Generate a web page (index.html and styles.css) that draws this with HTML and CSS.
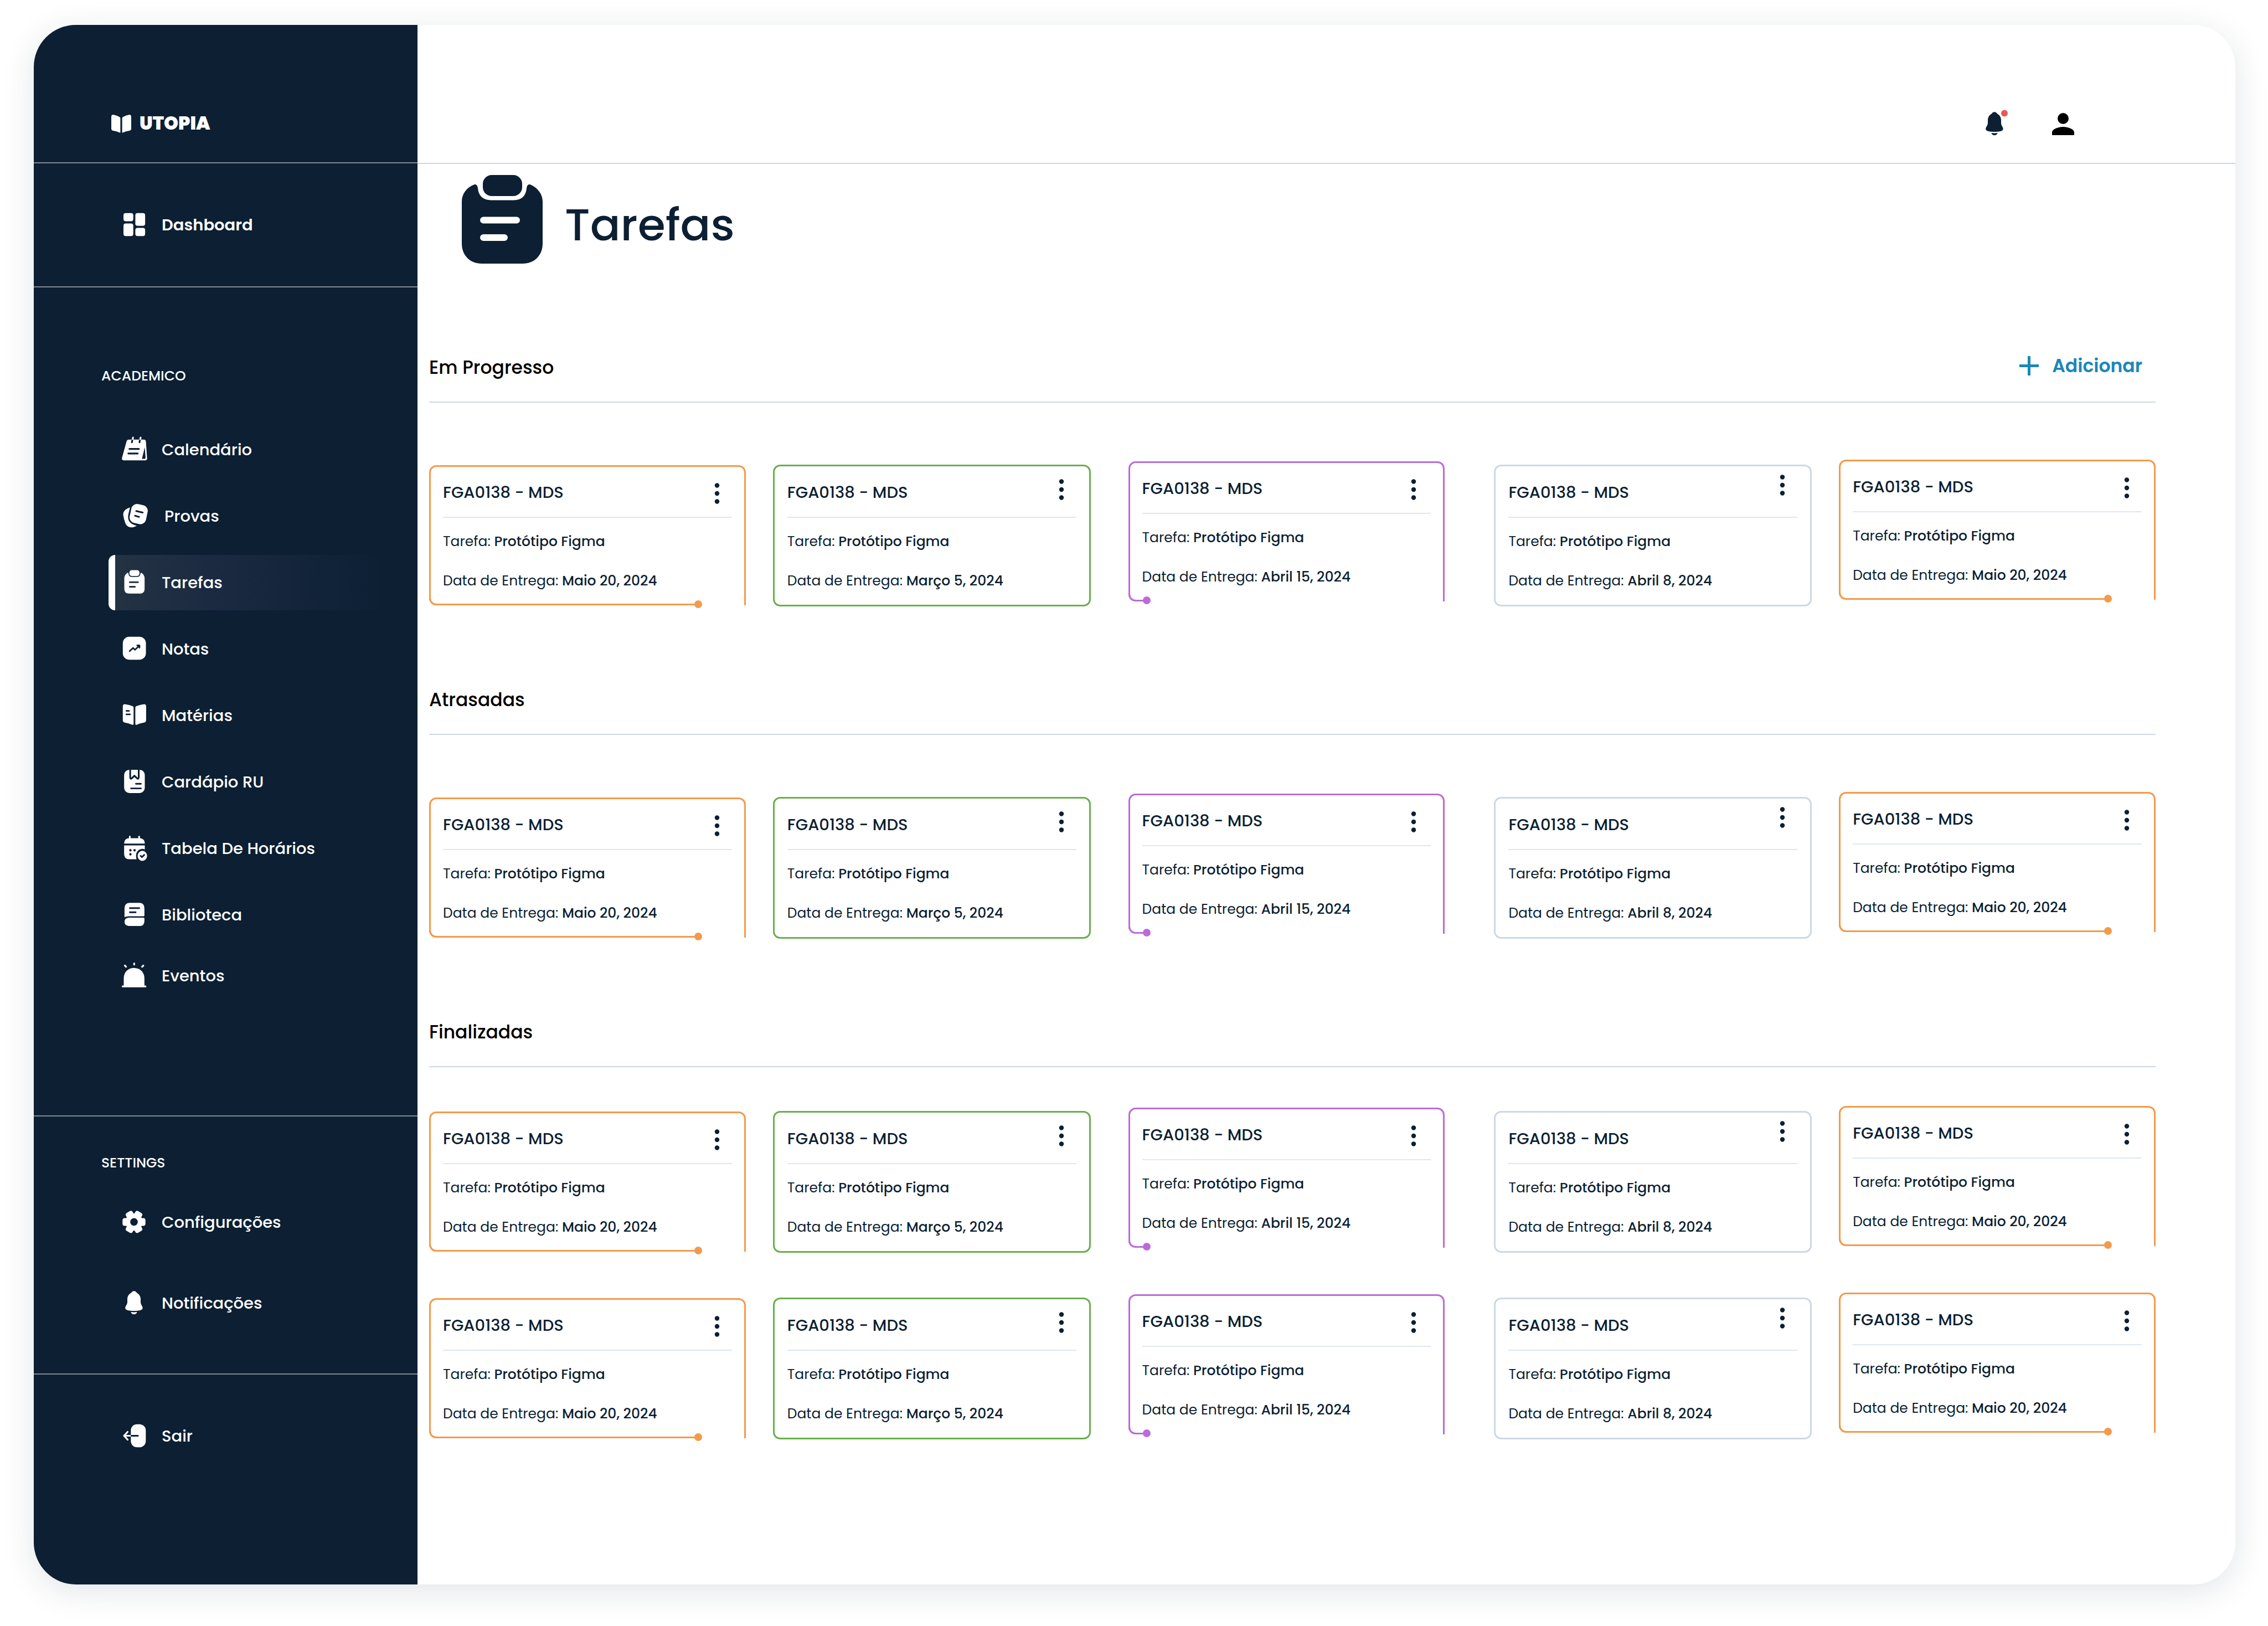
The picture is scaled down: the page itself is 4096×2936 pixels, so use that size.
FILE: index.html
```
<!DOCTYPE html>
<html lang="pt-BR">
<head>
<meta charset="utf-8">
<meta name="viewport" content="width=device-width, initial-scale=1">
<title>Utopia – Tarefas</title>
<link rel="stylesheet" href="styles.css">
</head>
<body>
<svg class="sprite" aria-hidden="true">
  <symbol id="i-more" viewBox="0 0 10 38"><circle cx="5" cy="4.5" r="4.2"/><circle cx="5" cy="19" r="4.2"/><circle cx="5" cy="33.5" r="4.2"/></symbol>
  <symbol id="i-bell" viewBox="0 0 50 50"><path d="M24 3.3C27 3.3 28.4 5.4 28.8 6.2C33.5 8.8 36 13 36 18V23C36 28 39.6 30 39.6 34C39.6 38 32 39 24 39S8.2 38 8.2 34C8.2 30 12 28 12 23V18C12 13 14.4 8.8 19.2 6.2C19.6 5.4 21 3.3 24 3.3Z"/><path d="M18.3 41Q24 41.8 29.7 41Q28 45.3 24 45.3Q20 45.3 18.3 41Z"/></symbol>
</svg>
<div class="shell">
  <aside class="sidebar">
    <a class="brand" href="#">
      <svg class="brand__icon" viewBox="11 12 123 104" preserveAspectRatio="none" aria-hidden="true"><path d="M11 26Q11 10 25 13Q45 17 62 25Q67 28 67 33V111Q67 117 61 114Q45 106 22 103Q11 102 11 90ZM134 26Q134 10 120 13Q100 17 83 25Q78 28 78 33V111Q78 117 84 114Q100 106 123 103Q134 102 134 90Z"/></svg>
      <span class="brand__name">UTOPIA</span>
    </a>
    <nav class="group group--top" aria-label="Principal">
      <a class="item item--strong" href="#"><svg class="item__icon" viewBox="0 0 50 50" aria-hidden="true"><rect x="5" y="3.8" width="17.7" height="14.7" rx="4"/><rect x="5" y="22.5" width="17.7" height="22.8" rx="4"/><rect x="26.4" y="3.8" width="17.7" height="23" rx="4"/><rect x="26.4" y="30.6" width="17.7" height="14.7" rx="4"/></svg>Dashboard</a>
    </nav>
    <nav class="group group--academic" aria-labelledby="nav-academic">
      <h2 class="group__label" id="nav-academic">ACADEMICO</h2>
      <div class="group__list">
      <a class="item" href="#"><svg class="item__icon" viewBox="0 0 146 146" aria-hidden="true"><path d="M65 9L62 22M105 9L102 22" class="w" stroke-width="9"/><path d="M44 20H122Q132 20 133 31L139 118Q140 129 129 129H17Q4 129 7 115L30 32Q33 20 44 20Z"/><path class="cut" d="M127 60L131 115Q131 121 126 121H112Z"/><path class="k" stroke-width="9" d="M46 69H96M40 93H90"/><path class="k" stroke-width="9" d="M61 24L59 34M101 24L99 34"/></svg>Calendário</a>
      <a class="item" href="#"><svg class="item__icon item__icon--wide" viewBox="0 0 161 146" aria-hidden="true"><path d="M49 27Q13 37 13 65Q16 88 25 112Q34 132 55 132Q70 132 85 124Q32 112 40 66Z"/><rect x="51" y="11" width="88" height="102" rx="30" transform="rotate(12 95 62)"/><path class="k" stroke-width="9" d="M82 46L116 54M76 71L97 77"/></svg>Provas</a>
      <a class="item item--active" href="#" aria-current="page"><svg class="item__icon" viewBox="0 0 146 146" aria-hidden="true"><rect x="46" y="7" width="53" height="31" rx="13"/><path d="M36 21Q41 20 41 27Q43 43 58 43H87Q102 43 104 27Q104 20 109 21Q126 31 126 50V105Q126 131 100 131H45Q19 131 19 105V50Q19 31 36 21Z"/><path class="k" stroke-width="9" d="M48 71H91M48 95H75"/></svg>Tarefas</a>
      <a class="item" href="#"><svg class="item__icon" viewBox="0 0 146 146" aria-hidden="true"><rect x="11" y="8" width="122" height="121" rx="34"/><path class="k" stroke-width="8" d="M47 84L65 67L75 77L97 56M87 54H99V66"/></svg>Notas</a>
      <a class="item" href="#"><svg class="item__icon" viewBox="0 0 146 138" preserveAspectRatio="none" aria-hidden="true"><path d="M11 24Q11 11 25 13Q45 16 62 22Q68 24 68 29V111Q68 117 61 115Q45 108 22 104Q11 103 11 92ZM134 24Q134 11 120 13Q100 16 83 22Q77 24 77 29V111Q77 117 84 115Q100 108 123 104Q134 103 134 92Z"/><path class="k" stroke-width="8" d="M30 46H44M30 63H49"/></svg>Matérias</a>
      <a class="item" href="#"><svg class="item__icon" viewBox="0 0 146 138" preserveAspectRatio="none" aria-hidden="true"><rect x="18" y="8" width="109" height="116" rx="27"/><path class="k k--butt" stroke-width="9" d="M50 6V46Q51 56 58 51L72 38L87 51Q94 56 95 46V6"/><path class="k" stroke-width="8" d="M80 78H107M54 101H107"/></svg>Cardápio RU</a>
      <a class="item" href="#"><svg class="item__icon" viewBox="0 0 146 138" preserveAspectRatio="none" aria-hidden="true"><path d="M18 42Q20 18 46 18H99Q125 18 127 42V45H18ZM18 54H127V123H46Q18 123 18 96Z"/><path class="w" stroke-width="9" d="M48 10V22M97 10V22"/><path class="cut" d="M81 106A33 33 0 0 1 128 74V125H84Q81 115 81 106Z"/><circle cx="114" cy="106" r="25"/><path class="k" stroke-width="8" d="M105 106L112 112L124 101"/><circle class="cut" cx="51" cy="78" r="6"/><circle class="cut" cx="73" cy="78" r="6"/><circle class="cut" cx="51" cy="98" r="6"/></svg>Tabela De Horários</a>
      <a class="item" href="#"><svg class="item__icon" viewBox="0 0 146 138" preserveAspectRatio="none" aria-hidden="true"><path d="M20 81V38Q20 9 46 9H99Q125 9 125 38V72Q125 76 121 76H40Q28 76 20 81ZM42 83H121Q125 83 125 87V98Q125 124 103 124H42Q20 122 20 103Q20 85 42 83Z"/><path class="k" stroke-width="8" d="M48 35H98M48 56H79"/></svg>Biblioteca</a>
      <a class="item item--last" href="#"><svg class="item__icon" viewBox="0 0 146 138" preserveAspectRatio="none" aria-hidden="true"><path d="M16 122V82C16 50 40 30 70 30S125 50 125 82V122Z"/><path class="w" stroke-width="9" d="M10 122H131M71 7V13M22 18L28 24M119 18L113 24"/></svg>Eventos</a>
      </div>
    </nav>
    <nav class="group group--settings" aria-labelledby="nav-settings">
      <h2 class="group__label" id="nav-settings">SETTINGS</h2>
      <div class="group__list">
      <a class="item" href="#"><svg class="item__icon" viewBox="0 0 50 50" aria-hidden="true"><circle cx="24" cy="24.4" r="15.5"/><rect x="3.3" y="17.4" width="41.4" height="14" rx="4"/><rect x="3.3" y="17.4" width="41.4" height="14" rx="4" transform="rotate(60 24 24.4)"/><rect x="3.3" y="17.4" width="41.4" height="14" rx="4" transform="rotate(120 24 24.4)"/><circle class="cut" cx="24" cy="24.4" r="6.8"/></svg>Configurações</a>
      <a class="item" href="#"><svg class="item__icon" aria-hidden="true"><use href="#i-bell"/></svg>Notificações</a>
      </div>
    </nav>
    <nav class="group group--exit" aria-label="Sessão">
      <a class="item" href="#"><svg class="item__icon" viewBox="0 0 50 50" aria-hidden="true"><rect x="18.3" y="3.8" width="27" height="41.5" rx="11"/><path class="w" stroke-width="3.2" d="M18 24.5H6M12.5 17.5L6 24.5L12.5 31.5"/><path class="k" stroke-width="3.2" d="M20 24.5H31"/><path class="k k--butt" stroke-width="3.2" d="M18.3 24.5H22"/></svg>Sair</a>
    </nav>
  </aside>

  <div class="content">
    <header class="topbar">
      <button class="topbar__button" type="button" aria-label="Notificações"><svg class="topbar__bell" viewBox="8 -1 40 46" aria-hidden="true"><use href="#i-bell" width="50" height="50"/><circle class="topbar__badge" cx="42" cy="5.5" r="6"/></svg></button>
      <button class="topbar__button" type="button" aria-label="Perfil"><svg class="topbar__user" viewBox="0 0 40 40" aria-hidden="true"><circle cx="20" cy="10" r="10"/><path d="M20 25C13.3 25 0 28.4 0 35V40H40V35C40 28.4 26.7 25 20 25Z"/></svg></button>
    </header>

    <main class="board">
      <div class="board__title">
        <svg class="board__icon" viewBox="0 0 146 160" aria-hidden="true"><rect x="38" y="0" width="71" height="38" rx="16"/><path d="M23 17Q28 16 29 24Q31 45 53 45.5H94Q115 45 117 24Q118 16 123 17C136 22 146 34 146 48V124C146 145 131 160 110 160H36C15 160 0 145 0 124V48C0 34 9 22 23 17Z"/><path stroke="#fff" stroke-width="12" stroke-linecap="round" d="M39 81.6H99M39 113H77"/></svg>
        <h1 class="board__heading">Tarefas</h1>
      </div>

      <section class="section">
        <div class="section__head">
          <h2 class="section__name">Em Progresso</h2>
          <button class="add" type="button"><svg class="add__icon" viewBox="0 0 35 35" aria-hidden="true"><path d="M15 0H20V15H35V20H20V35H15V20H0V15H15Z"/></svg>Adicionar</button>
        </div>
        <div class="row">
          <article class="task task--orange task--open"><div class="task__head"><h3 class="task__name">FGA0138 - MDS</h3><button class="task__more" type="button" aria-label="Opções"><svg class="task__dots" aria-hidden="true"><use href="#i-more"/></svg></button></div><p class="task__line">Tarefa: <b>Protótipo Figma</b></p><p class="task__line">Data de Entrega: <b>Maio 20, 2024</b></p><span class="task__progress" style="width:86%"></span></article>
          <article class="task task--green"><div class="task__head"><h3 class="task__name">FGA0138 - MDS</h3><button class="task__more" type="button" aria-label="Opções"><svg class="task__dots" aria-hidden="true"><use href="#i-more"/></svg></button></div><p class="task__line">Tarefa: <b>Protótipo Figma</b></p><p class="task__line">Data de Entrega: <b>Março 5, 2024</b></p></article>
          <article class="task task--purple task--open"><div class="task__head"><h3 class="task__name">FGA0138 - MDS</h3><button class="task__more" type="button" aria-label="Opções"><svg class="task__dots" aria-hidden="true"><use href="#i-more"/></svg></button></div><p class="task__line">Tarefa: <b>Protótipo Figma</b></p><p class="task__line">Data de Entrega: <b>Abril 15, 2024</b></p><span class="task__progress" style="width:6%"></span></article>
          <article class="task task--gray"><div class="task__head"><h3 class="task__name">FGA0138 - MDS</h3><button class="task__more" type="button" aria-label="Opções"><svg class="task__dots" aria-hidden="true"><use href="#i-more"/></svg></button></div><p class="task__line">Tarefa: <b>Protótipo Figma</b></p><p class="task__line">Data de Entrega: <b>Abril 8, 2024</b></p></article>
          <article class="task task--orange task--open"><div class="task__head"><h3 class="task__name">FGA0138 - MDS</h3><button class="task__more" type="button" aria-label="Opções"><svg class="task__dots" aria-hidden="true"><use href="#i-more"/></svg></button></div><p class="task__line">Tarefa: <b>Protótipo Figma</b></p><p class="task__line">Data de Entrega: <b>Maio 20, 2024</b></p><span class="task__progress" style="width:86%"></span></article>
        </div>
      </section>

      <section class="section">
        <div class="section__head">
          <h2 class="section__name">Atrasadas</h2>
        </div>
        <div class="row">
          <article class="task task--orange task--open"><div class="task__head"><h3 class="task__name">FGA0138 - MDS</h3><button class="task__more" type="button" aria-label="Opções"><svg class="task__dots" aria-hidden="true"><use href="#i-more"/></svg></button></div><p class="task__line">Tarefa: <b>Protótipo Figma</b></p><p class="task__line">Data de Entrega: <b>Maio 20, 2024</b></p><span class="task__progress" style="width:86%"></span></article>
          <article class="task task--green"><div class="task__head"><h3 class="task__name">FGA0138 - MDS</h3><button class="task__more" type="button" aria-label="Opções"><svg class="task__dots" aria-hidden="true"><use href="#i-more"/></svg></button></div><p class="task__line">Tarefa: <b>Protótipo Figma</b></p><p class="task__line">Data de Entrega: <b>Março 5, 2024</b></p></article>
          <article class="task task--purple task--open"><div class="task__head"><h3 class="task__name">FGA0138 - MDS</h3><button class="task__more" type="button" aria-label="Opções"><svg class="task__dots" aria-hidden="true"><use href="#i-more"/></svg></button></div><p class="task__line">Tarefa: <b>Protótipo Figma</b></p><p class="task__line">Data de Entrega: <b>Abril 15, 2024</b></p><span class="task__progress" style="width:6%"></span></article>
          <article class="task task--gray"><div class="task__head"><h3 class="task__name">FGA0138 - MDS</h3><button class="task__more" type="button" aria-label="Opções"><svg class="task__dots" aria-hidden="true"><use href="#i-more"/></svg></button></div><p class="task__line">Tarefa: <b>Protótipo Figma</b></p><p class="task__line">Data de Entrega: <b>Abril 8, 2024</b></p></article>
          <article class="task task--orange task--open"><div class="task__head"><h3 class="task__name">FGA0138 - MDS</h3><button class="task__more" type="button" aria-label="Opções"><svg class="task__dots" aria-hidden="true"><use href="#i-more"/></svg></button></div><p class="task__line">Tarefa: <b>Protótipo Figma</b></p><p class="task__line">Data de Entrega: <b>Maio 20, 2024</b></p><span class="task__progress" style="width:86%"></span></article>
        </div>
      </section>

      <section class="section section--compact">
        <div class="section__head">
          <h2 class="section__name">Finalizadas</h2>
        </div>
        <div class="row">
          <article class="task task--orange task--open"><div class="task__head"><h3 class="task__name">FGA0138 - MDS</h3><button class="task__more" type="button" aria-label="Opções"><svg class="task__dots" aria-hidden="true"><use href="#i-more"/></svg></button></div><p class="task__line">Tarefa: <b>Protótipo Figma</b></p><p class="task__line">Data de Entrega: <b>Maio 20, 2024</b></p><span class="task__progress" style="width:86%"></span></article>
          <article class="task task--green"><div class="task__head"><h3 class="task__name">FGA0138 - MDS</h3><button class="task__more" type="button" aria-label="Opções"><svg class="task__dots" aria-hidden="true"><use href="#i-more"/></svg></button></div><p class="task__line">Tarefa: <b>Protótipo Figma</b></p><p class="task__line">Data de Entrega: <b>Março 5, 2024</b></p></article>
          <article class="task task--purple task--open"><div class="task__head"><h3 class="task__name">FGA0138 - MDS</h3><button class="task__more" type="button" aria-label="Opções"><svg class="task__dots" aria-hidden="true"><use href="#i-more"/></svg></button></div><p class="task__line">Tarefa: <b>Protótipo Figma</b></p><p class="task__line">Data de Entrega: <b>Abril 15, 2024</b></p><span class="task__progress" style="width:6%"></span></article>
          <article class="task task--gray"><div class="task__head"><h3 class="task__name">FGA0138 - MDS</h3><button class="task__more" type="button" aria-label="Opções"><svg class="task__dots" aria-hidden="true"><use href="#i-more"/></svg></button></div><p class="task__line">Tarefa: <b>Protótipo Figma</b></p><p class="task__line">Data de Entrega: <b>Abril 8, 2024</b></p></article>
          <article class="task task--orange task--open"><div class="task__head"><h3 class="task__name">FGA0138 - MDS</h3><button class="task__more" type="button" aria-label="Opções"><svg class="task__dots" aria-hidden="true"><use href="#i-more"/></svg></button></div><p class="task__line">Tarefa: <b>Protótipo Figma</b></p><p class="task__line">Data de Entrega: <b>Maio 20, 2024</b></p><span class="task__progress" style="width:86%"></span></article>
        </div>
        <div class="row">
          <article class="task task--orange task--open"><div class="task__head"><h3 class="task__name">FGA0138 - MDS</h3><button class="task__more" type="button" aria-label="Opções"><svg class="task__dots" aria-hidden="true"><use href="#i-more"/></svg></button></div><p class="task__line">Tarefa: <b>Protótipo Figma</b></p><p class="task__line">Data de Entrega: <b>Maio 20, 2024</b></p><span class="task__progress" style="width:86%"></span></article>
          <article class="task task--green"><div class="task__head"><h3 class="task__name">FGA0138 - MDS</h3><button class="task__more" type="button" aria-label="Opções"><svg class="task__dots" aria-hidden="true"><use href="#i-more"/></svg></button></div><p class="task__line">Tarefa: <b>Protótipo Figma</b></p><p class="task__line">Data de Entrega: <b>Março 5, 2024</b></p></article>
          <article class="task task--purple task--open"><div class="task__head"><h3 class="task__name">FGA0138 - MDS</h3><button class="task__more" type="button" aria-label="Opções"><svg class="task__dots" aria-hidden="true"><use href="#i-more"/></svg></button></div><p class="task__line">Tarefa: <b>Protótipo Figma</b></p><p class="task__line">Data de Entrega: <b>Abril 15, 2024</b></p><span class="task__progress" style="width:6%"></span></article>
          <article class="task task--gray"><div class="task__head"><h3 class="task__name">FGA0138 - MDS</h3><button class="task__more" type="button" aria-label="Opções"><svg class="task__dots" aria-hidden="true"><use href="#i-more"/></svg></button></div><p class="task__line">Tarefa: <b>Protótipo Figma</b></p><p class="task__line">Data de Entrega: <b>Abril 8, 2024</b></p></article>
          <article class="task task--orange task--open"><div class="task__head"><h3 class="task__name">FGA0138 - MDS</h3><button class="task__more" type="button" aria-label="Opções"><svg class="task__dots" aria-hidden="true"><use href="#i-more"/></svg></button></div><p class="task__line">Tarefa: <b>Protótipo Figma</b></p><p class="task__line">Data de Entrega: <b>Maio 20, 2024</b></p><span class="task__progress" style="width:86%"></span></article>
        </div>
      </section>
    </main>
  </div>
</div>
</body>
</html>
```
FILE: styles.css
```
:root {
  --navy: #0c1f33;
  --rule: #cdd8e5;
  --blue: #1a87b9;
}

* { box-sizing: border-box; }

body {
  margin: 0;
  min-height: 100vh;
  display: flex;
  padding: 45px 59px 75px 61px;
  background: #fff;
  color: var(--navy);
  font-family: Poppins, Inter, sans-serif;
}

h1, h2, h3, p { margin: 0; font-weight: 500; }
a { color: inherit; text-decoration: none; }
button { padding: 0; border: 0; background: none; font: inherit; color: inherit; cursor: pointer; }
svg { display: block; flex: none; }
.sprite { position: absolute; width: 0; height: 0; }

.shell {
  flex: 1;
  display: flex;
  overflow: hidden;
  border-radius: 76px;
  background: #fff;
  box-shadow: 0 12px 60px rgba(12, 40, 60, .12);
}

/* Sidebar */
.sidebar {
  --cut: var(--navy);
  flex: none;
  width: 693px;
  background: var(--navy);
  color: #fff;
  fill: #fff;
}

.cut { fill: var(--cut); }
.k { fill: none; stroke: var(--cut); stroke-linecap: round; stroke-linejoin: round; }
.k--butt { stroke-linecap: butt; }
.w { fill: none; stroke: #fff; stroke-linecap: round; stroke-linejoin: round; }

.brand {
  display: flex;
  align-items: flex-end;
  gap: 15px;
  padding: 161px 0 53px 140px;
  border-bottom: 2px solid #7f8b95;
}
.brand__icon { width: 36px; height: 33px; }
.brand__name { font-size: 33px; font-weight: 900; line-height: 34px; }

.group { padding-left: 135px; border-bottom: 2px solid #7f8b95; }
.group--top { padding-top: 61px; padding-bottom: 61px; }
.group--academic { padding-top: 145px; padding-bottom: 202px; }
.group--settings { padding-top: 69px; padding-bottom: 77px; }
.group--exit { padding-top: 61px; border-bottom: 0; }

.group__label {
  margin-left: -13px;
  font-size: 25px;
  line-height: 30px;
}
.group__list { display: flex; flex-direction: column; gap: 20px; margin-top: 68px; }
.group--settings .group__list { gap: 46px; margin-top: 42px; }

.item {
  display: flex;
  align-items: center;
  gap: 24px;
  height: 100px;
  margin-right: 50px;
  padding-left: 10px;
  border-left: 12px solid transparent;
  font-size: 29px;
  font-weight: 500;
}
.item--strong { font-weight: 600; }
.item--last { margin-top: -10px; }
.item--active {
  --cut: #223243;
  border-left-color: #fff;
  border-radius: 12px 0 0 12px;
  background: linear-gradient(90deg, #233343, #1b2a41 35%, var(--navy)) padding-box;
}
.item__icon { width: 50px; height: 50px; }
.item__icon--wide { width: 55px; }

/* Top bar */
.content { flex: 1; min-width: 0; }

.topbar {
  display: flex;
  justify-content: flex-end;
  align-items: flex-end;
  gap: 80px;
  padding: 153px 291px 50px 0;
  border-bottom: 2px solid var(--rule);
}
.topbar__bell { width: 40px; height: 46px; fill: var(--navy); overflow: visible; }
.topbar__badge { fill: #eb5757; }
.topbar__user { width: 40px; height: 40px; fill: #000; }

/* Board */
.board { padding: 20px 144px 120px 21px; }

.board__title {
  display: flex;
  align-items: flex-end;
  gap: 40px;
  padding-left: 59px;
  margin-bottom: 168px;
}
.board__icon { width: 146px; height: 160px; fill: var(--navy); }
.board__heading { font-size: 81px; line-height: 140px; }

.section + .section { margin-top: 149px; }
.section__head {
  display: flex;
  justify-content: space-between;
  align-items: flex-start;
  padding-bottom: 41px;
  margin-bottom: 103px;
  border-bottom: 2px solid var(--rule);
}
.section--compact .section__head { margin-bottom: 70px; }
.section__name { color: #000; font-size: 33px; line-height: 40px; }

.add {
  display: flex;
  align-items: center;
  gap: 24px;
  margin-top: -1px;
  padding-right: 24px;
  color: var(--blue);
  font-size: 33px;
  font-weight: 600;
  line-height: 34px;
}
.add__icon { width: 35px; height: 35px; fill: currentColor; }

.row { display: flex; align-items: flex-start; }
.row + .row { margin-top: 72px; }

/* Task card */
.task {
  --accent: var(--rule);
  position: relative;
  flex: 1 1 572px;
  min-width: 0;
  padding: 0 22px 24px;
  border: 3px solid var(--accent);
  border-radius: 13px;
}
.task:nth-child(1) { margin-top: 10px; }
.task:nth-child(2) { margin: 9px 0 0 49px; }
.task:nth-child(3) { margin: 3px 0 0 68px; }
.task:nth-child(4) { margin: 9px 0 0 89px; }
.task:nth-child(5) { margin: 0 0 0 49px; }

.task--orange { --accent: #f39a4a; }
.task--green { --accent: #68b04d; }
.task--purple { --accent: #bb6bd9; }
.task--green, .task--gray { flex-basis: 574px; padding: 1px 23px 23px; }
.task--open { border-bottom-width: 0; border-bottom-right-radius: 0; }

.task__head {
  display: flex;
  justify-content: space-between;
  align-items: center;
  height: 92px;
  margin-bottom: 23px;
  padding-top: 2px;
  border-bottom: 2px solid #dfe7ef;
}
.task__name { font-size: 29px; }
.task__more { display: flex; justify-content: center; width: 54px; margin-top: 4px; }
.task--green .task__more { margin: 0 0 10px; }
.task--gray .task__more { margin: 0 0 26px; }
.task--purple .task__more { margin-right: 4px; }
.task__dots { width: 10px; height: 38px; fill: var(--navy); }

.task__line { font-size: 25px; font-weight: 400; line-height: 40px; white-space: nowrap; }
.task__line + .task__line { margin-top: 31px; }
.task__line b { font-weight: 500; }

/* Bottom edge, drawn as far as the task has progressed */
.task__progress {
  position: absolute;
  left: -3px;
  bottom: 0;
  height: 14px;
  border: solid var(--accent);
  border-width: 0 0 3px 3px;
  border-bottom-left-radius: 13px;
}
.task__progress::after {
  content: "";
  position: absolute;
  right: -6px;
  bottom: -8px;
  width: 14px;
  height: 14px;
  border-radius: 50%;
  background: var(--accent);
}
```
